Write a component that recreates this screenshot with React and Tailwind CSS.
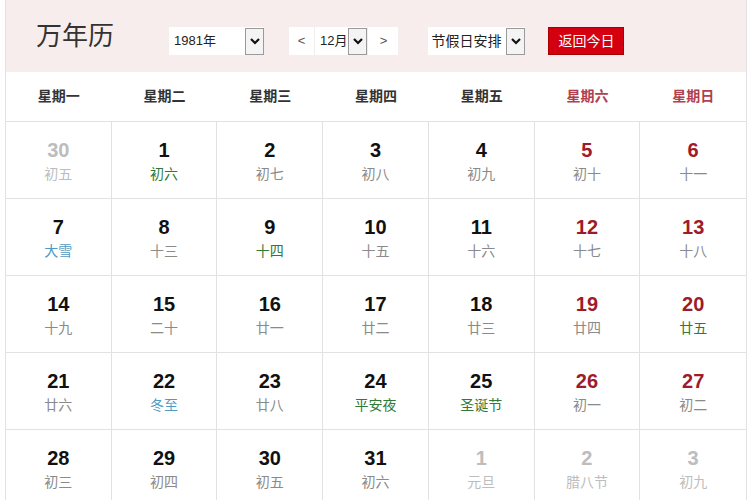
import React from "react";

const weekdays = ["星期一", "星期二", "星期三", "星期四", "星期五", "星期六", "星期日"];

// tone: muted = other month, normal, weekend
const days = [
  ["30", "初五", "muted"], ["1", "初六", "normal", "green"], ["2", "初七"], ["3", "初八"], ["4", "初九"], ["5", "初十", "weekend"], ["6", "十一", "weekend"],
  ["7", "大雪", "normal", "blue"], ["8", "十三"], ["9", "十四", "normal", "green"], ["10", "十五"], ["11", "十六"], ["12", "十七", "weekend"], ["13", "十八", "weekend"],
  ["14", "十九"], ["15", "二十"], ["16", "廿一"], ["17", "廿二"], ["18", "廿三"], ["19", "廿四", "weekend"], ["20", "廿五", "weekend", "green"],
  ["21", "廿六"], ["22", "冬至", "normal", "blue"], ["23", "廿八"], ["24", "平安夜", "normal", "green"], ["25", "圣诞节", "normal", "green"], ["26", "初一", "weekend"], ["27", "初二", "weekend"],
  ["28", "初三"], ["29", "初四"], ["30", "初五"], ["31", "初六"], ["1", "元旦", "muted"], ["2", "腊八节", "muted"], ["3", "初九", "muted"],
];

const numClass = {
  muted: "text-[#bdbdbd]",
  normal: "text-[#111]",
  weekend: "text-[#9e1b2a]",
};

const subClass = {
  gray: "text-[#8a8a8a]",
  green: "text-[#2f7a3a]",
  blue: "text-[#4d9cc4]",
  muted: "text-[#bdbdbd]",
};

function Chevron() {
  return (
    <svg width="12" height="12" viewBox="0 0 12 12">
      <path d="M2 4 L6 8 L10 4" fill="none" stroke="#111" strokeWidth="2.2" />
    </svg>
  );
}

function DropBtn() {
  return (
    <span className="flex h-[27px] w-[19px] items-center justify-center border border-[#9a9a9a] bg-[#f4f4f4]">
      <Chevron />
    </span>
  );
}

export default function App() {
  return (
    <div
      className="h-[500px] w-[750px] overflow-hidden bg-white pl-[5px] pr-[3px]"
      style={{ fontFamily: '"Liberation Sans", "Noto Sans CJK SC", sans-serif' }}
    >
      <div className="border-l border-r border-[#e2e2e2]">
        {/* header */}
        <div className="flex h-[72px] items-start bg-[#f8eded] pl-[30px]">
          <h1
            className="mt-[20px] w-[133px] text-[26px] leading-[34px] text-[#333]"
            style={{ fontFamily: '"Liberation Serif", "Noto Sans CJK SC", serif' }}
          >
            万年历
          </h1>
          <div className="mt-[27px] flex h-[28px] w-[95px] items-center justify-between bg-white pl-[5px] text-[13px] text-[#222]">
            <span>1981年</span>
            <DropBtn />
          </div>
          <div className="ml-[25px] mt-[27px] flex h-[28px] items-center bg-white text-[13px] text-[#222]">
            <span className="flex h-[28px] w-[26px] items-center justify-center border-r border-[#eee] text-[#555]">&lt;</span>
            <span className="pl-[5px] pr-[1px]">12月</span>
            <DropBtn />
            <span className="flex h-[28px] w-[31px] items-center justify-center border-l border-[#eee] text-[#555]">&gt;</span>
          </div>
          <div className="ml-[30px] mt-[27px] flex h-[28px] w-[97px] items-center justify-between bg-white pl-[3px] text-[14px] text-[#222]">
            <span>节假日安排</span>
            <DropBtn />
          </div>
          <button className="ml-[23px] mt-[27px] flex h-[28px] w-[76px] items-center justify-center border border-[#a00] bg-[#d40010] text-[14px] text-white">
            返回今日
          </button>
        </div>

        {/* weekday row */}
        <div className="grid h-[50px] grid-cols-7 border-b border-[#e2e2e2]">
          {weekdays.map((w, i) => (
            <div
              key={w}
              className={`flex items-center justify-center text-[14px] font-bold ${i >= 5 ? "text-[#b04050]" : "text-[#333]"}`}
            >
              {w}
            </div>
          ))}
        </div>

        {/* day grid */}
        <div className="grid grid-cols-7">
          {days.map(([n, sub, tone = "normal", subTone], i) => (
            <div
              key={i}
              className={`flex h-[77px] flex-col items-center border-b border-[#e2e2e2] pt-[16px] ${i % 7 !== 6 ? "border-r" : ""}`}
            >
              <span className={`text-[20px] font-bold leading-[24px] ${numClass[tone]}`}>{n}</span>
              <span
                className={`mt-[2px] text-[14px] leading-[20px] ${tone === "muted" ? subClass.muted : subClass[subTone || "gray"]}`}
              >
                {sub}
              </span>
            </div>
          ))}
        </div>
      </div>
    </div>
  );
}
